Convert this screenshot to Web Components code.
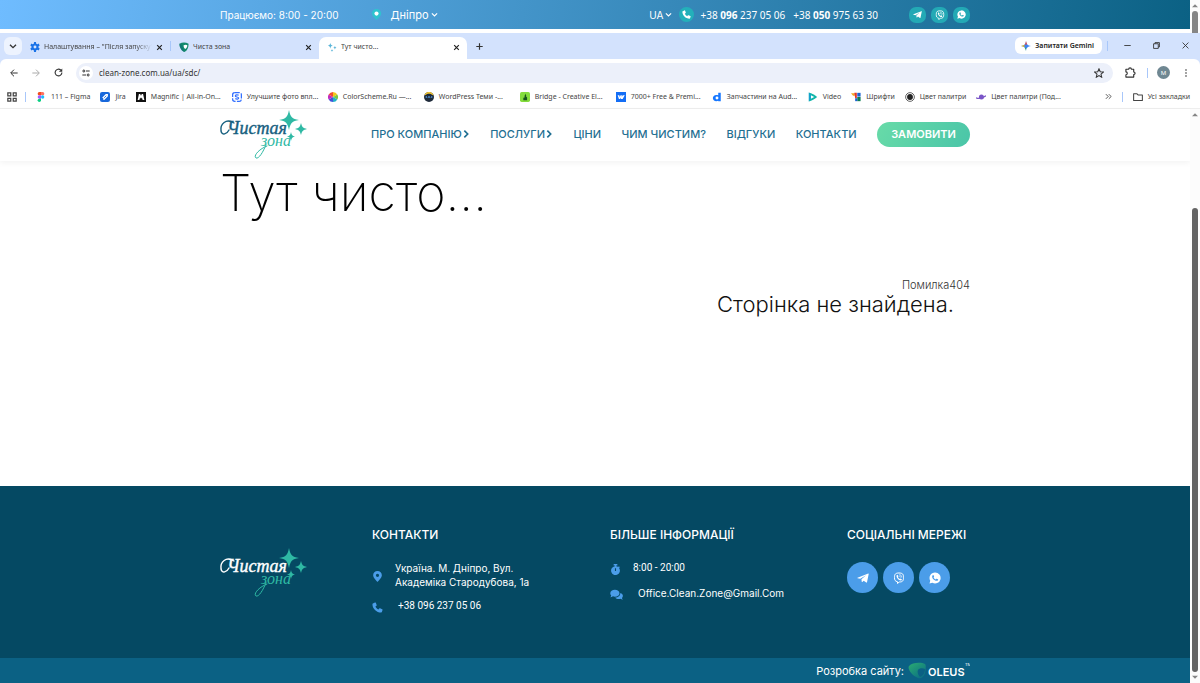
<!DOCTYPE html>
<html lang="uk">
<head>
<meta charset="utf-8">
<title>Тут чисто...</title>
<style>
  html, body { height: 100%; }
  body {
    margin: 0;
    background: #fff;
    color: #111;
    font-family: Inter, "Noto Sans", sans-serif;
    font-size: 10px;
    overflow: hidden;
  }
</style>
</head>
<body>
<clean-zone-desktop></clean-zone-desktop>

<script>
/*
Icons
Each one is the inside of an svg, with its viewBox
*/
const ICONS = {
  pin: ['0 0 24 24', '<path fill="currentColor" fill-rule="evenodd" d="M12 0C6.500 0 2.500 4 2.500 9.500 2.500 15.500 12 24 12 24s9.500-8.500 9.500-14.500C21.500 4 17.500 0 12 0zm0 6a3.500 3.500 0 1 1 0 7 3.500 3.500 0 0 1 0-7z"/>'],
  cityPin: ['0 0 24 24', '<path fill="#2fc3cf" d="M12 0C6 0 2 4.500 2 10c0 6 10 14 10 14s10-8 10-14c0-5.500-4-10-10-10z"/><circle cx="12" cy="10" r="4.500" fill="#fff"/>'],
  phone: ['0 0 24 24', '<path fill="currentColor" d="M2 3.500 6.500 1c.7-.3 1.500 0 1.800.8l1.900 4.800c.2.600 0 1.200-.5 1.600L7.500 10c1.400 3 3.500 5.100 6.500 6.500l1.800-2.200c.4-.5 1.100-.700 1.700-.400l4.700 1.900c.7.300 1 1.100.8 1.800l-1.500 4.400c-.2.600-.8 1-1.400 1C9.500 23 1 14.500 1 4.800c0-.6.400-1.100 1-1.300z"/>'],
  telegram: ['0 0 24 24', '<path fill="currentColor" d="M1 11.500 22.500 3c.6-.2 1 .2.900.9L20 20.500c-.2.900-.8 1-1.500.6l-5.200-3.800-2.600 2.600c-.5.500-1.100.3-1.200-.4l-.6-4.900L18 6.500 6.500 13.700 1.200 12.600c-.9-.3-.9-.8-.2-1.100z"/>'],
  viber: ['0 0 24 24', '<path fill="none" stroke="currentColor" stroke-width="2" d="M12 2c7 0 9 2 9 9s-2 9-8.500 9L9 23v-3.500C4 18.600 3 16 3 11c0-7 2-9 9-9z"/><path fill="currentColor" d="m7 7 2-1.500 2 3-1 1.500c.8 2 1.800 3 3.800 4l1.400-1.200 2.800 2-1.500 2C12 17.500 6.500 11.500 7 7z"/><path fill="none" stroke="currentColor" stroke-width="1.500" d="M12.500 5.500c3.500.3 5 2 5 5.500M12.800 8.300c1.500.2 2.100 1 2.200 2.500"/>'],
  whatsapp: ['0 0 24 24', '<path fill="currentColor" fill-rule="evenodd" d="M12 1a11 11 0 0 0-9.500 16.500L1 23l5.700-1.500A11 11 0 1 0 12 1zM7.500 6.500c.5-.5 1.300-.5 1.600.1l1 2.400c.2.400.1.800-.2 1.200l-.8 1c1 1.800 2.300 3 4.200 3.800l1-1.200c.3-.4.700-.5 1.200-.3l2.300 1.100c.7.300.6 1 .2 1.700-2.400 3.200-11.700-.700-11.700-7.300 0-1.100.5-1.900 1.200-2.500z"/>'],
  chevron: ['0 0 24 24', '<path fill="none" stroke="currentColor" stroke-width="4" d="m3 8 9 9 9-9"/>'],
  chevronRight: ['0 0 24 24', '<path fill="none" stroke="currentColor" stroke-width="5" d="m7 2 10 10L7 22"/>'],
  cross: ['0 0 24 24', '<path stroke="currentColor" stroke-width="4" d="m4 4 16 16M20 4 4 20"/>'],
  thinCross: ['0 0 24 24', '<path stroke="currentColor" stroke-width="3" d="m2 2 20 20M22 2 2 22"/>'],
  plus: ['0 0 24 24', '<path stroke="currentColor" stroke-width="4" d="M12 1v22M1 12h22"/>'],
  minus: ['0 0 24 24', '<path stroke="currentColor" stroke-width="3" d="M1 12h22"/>'],
  restore: ['0 0 24 24', '<path fill="none" stroke="currentColor" stroke-width="3" d="M2 6h16v16H2zM7 6V2h15v15h-4"/>'],
  back: ['0 0 24 24', '<path fill="none" stroke="currentColor" stroke-width="3" d="M23 12H3M12 2 2 12l10 10"/>'],
  forward: ['0 0 24 24', '<path fill="none" stroke="currentColor" stroke-width="3" d="M1 12h20M12 2l10 10-10 10"/>'],
  reload: ['0 0 24 24', '<path fill="none" stroke="currentColor" stroke-width="3" d="M21 12a9 9 0 1 1-3-6.700"/><path fill="currentColor" d="M22 1v9h-9z"/>'],
  tune: ['0 0 24 24', '<path fill="none" stroke="currentColor" stroke-width="3" d="M12 6h11M1 18h11"/><circle cx="5.500" cy="6" r="3" fill="none" stroke="currentColor" stroke-width="3"/><circle cx="18.500" cy="18" r="3" fill="none" stroke="currentColor" stroke-width="3"/>'],
  star: ['0 0 24 24', '<path fill="none" stroke="currentColor" stroke-width="2.500" d="m12 2 3 7 7.500.7-5.700 5 1.700 7.500L12 18.300l-6.500 3.900 1.700-7.500-5.700-5L9 9z"/>'],
  puzzle: ['0 0 24 24', '<path fill="none" stroke="currentColor" stroke-width="2.500" stroke-linejoin="round" d="M2 5h6c0-4 6-4 6 0h5v6c4 0 4 5.500 0 5.500V22H2v-5c4 0 4-6.500 0-6.500z"/>'],
  dots: ['0 0 24 24', '<g fill="currentColor"><circle cx="12" cy="3" r="2.500"/><circle cx="12" cy="12" r="2.500"/><circle cx="12" cy="21" r="2.500"/></g>'],
  folder: ['0 0 24 24', '<path fill="none" stroke="currentColor" stroke-width="2.500" stroke-linejoin="round" d="M1.500 4h7.500l3 3h10.500v13.500h-21z"/>'],
  apps: ['0 0 24 24', '<path fill="none" stroke="currentColor" stroke-width="3" d="M2 2h7v7H2zM15 2h7v7h-7zM2 15h7v7H2zM15 15h7v7h-7z"/>'],
  more: ['0 0 24 24', '<path fill="none" stroke="currentColor" stroke-width="3" d="m3 4 8 8-8 8M13 4l8 8-8 8"/>'],
  arrowUp: ['0 0 10 6', '<path fill="#858585" d="M5 0l5 5H0z"/>'],
  arrowDown: ['0 0 10 6', '<path fill="#858585" d="M5 6 0 1h10z"/>'],
  timer: ['0 0 24 24', '<path fill="currentColor" fill-rule="evenodd" d="M8 0h8v3h-2.500v2c1.600.3 3 .9 4.200 1.800L19.500 5l2 2-1.700 1.900A9.600 9.600 0 1 1 10.500 5V3H8zm2.800 9v6.500h2.400V9z"/>'],
  chat: ['0 0 24 24', '<path fill="currentColor" d="M9 3c4.700 0 8.500 2.800 8.500 6.500S13.700 16 9 16c-1.300 0-2.500-.2-3.600-.6C4 16.400 2 17 .5 17c.8-.8 1.500-2 1.700-3.200C1 12.600.5 11 .5 9.500.5 5.800 4.300 3 9 3z"/><path fill="currentColor" d="M19 9c3 .7 4.800 2.800 4.800 5.500 0 1.500-.6 2.900-1.700 4 .2 1.200.9 2.200 1.700 3-1.600 0-3.400-.6-4.700-1.500-4 1.200-7.800-.200-9.400-2.500C15 17.500 19.200 14 19 9z"/>'],
  gear: ['0 0 24 24', '<path fill="none" stroke="#1a73e8" stroke-width="5" d="M12 6a6 6 0 1 1 0 12 6 6 0 0 1 0-12z"/><path stroke="#1a73e8" stroke-width="5" d="M12 0v5M12 19v5M2 6l4 2.500M18 15.500 22 18M2 18l4-2.500M18 8.500 22 6"/>'],
  shield: ['0 0 24 24', '<path fill="#138a6c" d="M1 4c7-4 15-4 22 0 0 9-3 17-10 20C6 21 1 13 1 4z"/><path fill="#fff" d="M11 8c4-2 7-2 9 0 0 4-2 7-5 9-3-2-4-5-4-9z"/><path fill="#0b6a78" d="M1 4c3 0 6 2 7 6 1 5 3 9 5 14C6 21 1 13 1 4z" opacity=".5"/>'],
  sparkles: ['0 0 24 24', '<path fill="#5bb5d8" d="M8 2c.8 5 2 6 6 7-4 1-5.200 2-6 7-.8-5-2-6-6-7 4-1 5.200-2 6-7zM19 9c.5 3 1.500 4 4 4.500-2.500.5-3.500 1.500-4 4.500-.5-3-1.500-4-4-4.500 2.500-.5 3.500-1.500 4-4.500zM12 17c.4 2 1 3 3 3.500-2 .5-2.600 1.500-3 3.500-.4-2-1-3-3-3.500 2-.5 2.600-1.500 3-3.500z"/>'],
  gemini: ['0 0 24 24', '<path fill="#3d83f5" d="M12 0c1 8 4 11 12 12-8 1-11 4-12 12-1-8-4-11-12-12 8-1 11-4 12-12z"/><path fill="#ea4335" d="M12 0c1 4 1.500 6 3 8l-6 1c1.500-2 2.500-5 3-9z"/><path fill="#fbbc04" d="M0 12c4-.5 6-1.500 8-3v6c-2-1.500-4-2.500-8-3z"/><path fill="#34a853" d="M12 24c-.5-4-1.500-6-3.500-8h4c-.3 2-.4 5-.5 8z"/>'],
  figma: ['0 0 24 24', '<path fill="#f24e1e" d="M8 0h4v8H8a4 4 0 0 1 0-8z"/><path fill="#ff7262" d="M12 0h4a4 4 0 0 1 0 8h-4z"/><path fill="#a259ff" d="M8 8h4v8H8a4 4 0 0 1 0-8z"/><circle cx="16" cy="12" r="4" fill="#1abcfe"/><path fill="#0acf83" d="M8 16h4v4a4 4 0 1 1-4-4z"/>'],
  jira: ['0 0 24 24', '<rect width="24" height="24" rx="5" fill="#1868db"/><path fill="#fff" d="M5 14 14 5h5v5l-9 9H8v-4z"/><path stroke="#1868db" stroke-width="2" d="m10 14 5-5"/>'],
  magnific: ['0 0 24 24', '<rect width="24" height="24" fill="#111"/><path fill="#fff" d="M4 19 7 5h3l2 4 2-4h3l3 14h-4l-2-6-2 3-2-3-2 6z"/>'],
  photo: ['0 0 24 24', '<rect x="1.500" y="1.500" width="21" height="21" rx="5" fill="none" stroke="#3370ff" stroke-width="3" stroke-dasharray="12 3"/><path fill="none" stroke="#3370ff" stroke-width="3" d="M16 8c-3-2-8-1-8 1.500 0 3 8 2 8 5 0 2.500-5 3.500-8 1"/>'],
  wheel: ['0 0 24 24', '<path fill="#f5c518" d="M12 12V0a12 12 0 0 1 10.400 6z"/><path fill="#7ac943" d="M12 12 22.400 6a12 12 0 0 1 0 12z"/><path fill="#22b1c9" d="m12 12 10.400 6A12 12 0 0 1 12 24z"/><path fill="#4353d8" d="M12 12v12a12 12 0 0 1-10.400-6z"/><path fill="#c22bc0" d="M12 12 1.600 18a12 12 0 0 1 0-12z"/><path fill="#ee4b32" d="M12 12 1.600 6A12 12 0 0 1 12 0z"/>'],
  ninja: ['0 0 24 24', '<circle cx="12" cy="12" r="12" fill="#1f2b3b"/><path fill="#f0c330" d="M1 8C4 1 9 0 12 0s8 1 11 8l-3-1C16 3 8 3 4 7z"/><path fill="#4e8dd0" d="M4 10h16v4H4z"/><path fill="#111" d="M7 10h3v3H7zM14 10h3v3h-3z"/>'],
  bridge: ['0 0 24 24', '<rect width="24" height="24" rx="4" fill="#83dc3c"/><path fill="#17551c" d="M8 20v-6l3-1V9l3-5 1 6h-1l3 3v7z"/>'],
  flowbite: ['0 0 24 24', '<rect width="24" height="24" fill="#146ef5"/><path fill="#fff" d="m4 8 4 0 1 4 2-4h3v4l2-4h5l-5 9h-4v-4l-2 4H7z"/>'],
  letterD: ['0 0 24 24', '<path fill="#1677ff" fill-rule="evenodd" d="M15 2h6v20h-6v-1C8 24 2 20 2 14.500 2 9 8 5 15 8zm-3 9a3.500 3.500 0 1 0 0 7 3.500 3.500 0 0 0 0-7z"/>'],
  video: ['0 0 24 24', '<path fill="#10b5a8" d="M2 1c7 2 14 6 20 11C16 17 9 21 2 23z"/><path fill="#fff" d="m7 8 8 4-8 4z"/><path fill="#1594e8" d="M2 1v22l5-7V8z" opacity=".6"/>'],
  fonts: ['0 0 24 24', '<path fill="#f4a51c" d="M0 3h9v6H5z"/><path fill="#e0342c" d="M8 2h6v13h-4z"/><path fill="#1c61d1" d="M15 2h8v9h-8z"/><path fill="#0a7c52" d="M15 12h8v10h-8z"/><path fill="#1c61d1" d="M10 15h5v7h-5z"/>'],
  target: ['0 0 24 24', '<circle cx="12" cy="12" r="10.500" fill="#fff" stroke="#444" stroke-width="2"/><circle cx="12" cy="12" r="7" fill="#222"/>'],
  planet: ['0 0 24 24', '<circle cx="13" cy="12" r="6" fill="#7a55c7"/><path fill="none" stroke="#7a55c7" stroke-width="3" d="M0 14c7 3 18-1 24-5"/>'],
};

// One svg icon, name and size come as attributes
class UiIcon extends HTMLElement {
  constructor() {
    super();
    this.attachShadow({ mode: 'open' });
    const [box, shape] = ICONS[this.getAttribute('name')];
    const size = this.getAttribute('size') || 10;
    this.shadowRoot.innerHTML = `
      <style>
        :host { display: inline-flex; flex: none; }
        svg { display: block; width: ${size}px; height: ${size}px; }
      </style>
      <svg viewBox="${box}" aria-hidden="true">${shape}</svg>
    `;
  }
}

// Logo with the sparkles, the word colour comes from --logo-ink
class BrandLogo extends HTMLElement {
  constructor() {
    super();
    this.attachShadow({ mode: 'open' });
    this.shadowRoot.innerHTML = `
      <style>
        :host { display: block; flex: none; }
        svg { display: block; width: 88px; height: 50px; overflow: visible; }
        .word { font: italic 18px "Liberation Serif", serif; fill: var(--logo-ink, #17607f); stroke: var(--logo-ink, #17607f); stroke-width: .4; }
        .zone { font: italic 16px "Liberation Serif", serif; fill: #2fb9a4; }
      </style>
      <svg viewBox="0 0 88 50" role="img">
        <text class="word" x="7" y="24">Чистая</text>
        <text class="zone" x="41" y="36">зона</text>
        <path fill="none" stroke="var(--logo-ink, #17607f)" stroke-width="1.400" stroke-linecap="round" d="M14 13C6 8 0 14 1 21c1 5 6 3 8-1"/>
        <path fill="none" stroke="#2fb9a4" stroke-width="1" stroke-linecap="round" d="M46 35c-3 7-7 14-10 13-3-2 3-9 11-12"/>
        <path fill="#2fb9a4" d="M69 0c1.500 7 3 9 10 10-7 1-8.500 3-10 10-1.500-7-3-9-10-10 7-1 8.500-3 10-10zM81 13c1 4 2 5 6 6-4 1-5 2-6 6-1-4-2-5-6-6 4-1 5-2 6-6zM71 22c.6 3 1.500 4 4 4.500-2.500.5-3.400 1.500-4 4.500-.6-3-1.500-4-4-4.500 2.500-.5 3.400-1.500 4-4.500z"/>
      </svg>
    `;
  }
}

class ScrollTrack extends HTMLElement {
  constructor() {
    super();
    this.attachShadow({ mode: 'open' });
    this.shadowRoot.innerHTML = `
      <style>
        :host { display: flex; flex-direction: column; align-items: center; flex: none; width: 10px; padding: 3px 0; box-sizing: border-box; background: #fcfcfc; overflow: hidden; }
        .before { flex: var(--before, 0) 0 0; }
        .thumb { flex: var(--thumb, 1) 0 0; width: 6px; border-radius: var(--thumb-radius, 3px); background: var(--thumb-ink, #636363); margin: 2px 0 var(--thumb-end, 2px); }
      </style>
      <ui-icon name="arrowUp" size="6"></ui-icon>
      <div class="before"></div>
      <div class="thumb"></div>
      <slot></slot>
    `;
  }
}

// Blue strip with the work hours and the phones
class TopBar extends HTMLElement {
  constructor() {
    super();
    this.attachShadow({ mode: 'open' });
    this.shadowRoot.innerHTML = `
      <style>
        :host { display: flex; height: 33px; background: #fff; }
        .bar { flex: 1; height: 29px; background: linear-gradient(100deg, #6fbcff, #0b6184); color: #fff; }
        .inner { display: flex; align-items: center; max-width: 750px; height: 29px; margin: 0 auto; }
        .city { display: flex; align-items: center; gap: 4px; margin-left: 32px; }
        .pin { margin-right: 5px; display: flex; }
        button { display: flex; align-items: center; gap: 2px; padding: 0; border: 0; background: none; color: inherit; font: inherit; }
        .city button { font-size: 11px; }
        .right { display: flex; align-items: center; margin-left: auto; }
        .round { display: flex; align-items: center; justify-content: center; width: 15px; height: 15px; border-radius: 50%; background: #23b0ba; margin: 0 6px 0 7px; }
        .phone { color: #fff; text-decoration: none; margin-right: 8px; font-family: "Noto Sans", sans-serif; }
        .social { display: flex; gap: 5px; margin-left: 23px; }
        .social a { display: flex; align-items: center; justify-content: center; width: 17px; height: 16px; border-radius: 7px; background: #23a9b5; color: #fff; }
        scroll-track { --thumb-ink: #858585; --thumb-radius: 3px 3px 0 0; --thumb-end: 0; padding-bottom: 0; }
      </style>
      <div class="bar">
        <div class="inner">
          <span>Працюємо: 8:00 - 20:00</span>
          <div class="city">
            <span class="pin"><ui-icon name="cityPin" size="11"></ui-icon></span>
            <button>Дніпро <ui-icon name="chevron" size="7"></ui-icon></button>
          </div>
          <div class="right">
            <button>UA <ui-icon name="chevron" size="7"></ui-icon></button>
            <span class="round"><ui-icon name="phone" size="9"></ui-icon></span>
            <a class="phone" href="#">+38 <b>096</b> 237 05 06</a>
            <a class="phone" href="#">+38 <b>050</b> 975 63 30</a>
            <div class="social">
              <a href="#" aria-label="Telegram"><ui-icon name="telegram" size="9"></ui-icon></a>
              <a href="#" aria-label="Viber"><ui-icon name="viber" size="10"></ui-icon></a>
              <a href="#" aria-label="WhatsApp"><ui-icon name="whatsapp" size="9"></ui-icon></a>
            </div>
          </div>
        </div>
      </div>
      <scroll-track></scroll-track>
    `;
  }
}

class BrowserTab extends HTMLElement {
  constructor() {
    super();
    this.attachShadow({ mode: 'open' });
    this.shadowRoot.innerHTML = `
      <style>
        :host { display: flex; align-items: center; gap: 4px; flex: none; width: 148px; height: 22px; padding: 0 7px 2px 8px; box-sizing: border-box; border-radius: 7px 7px 0 0; }
        :host([active]) { background: #fff; }
        .name { flex: 1; overflow: hidden; white-space: nowrap; }
        :host([long]) .name { -webkit-mask: linear-gradient(90deg, #000 85%, transparent); mask: linear-gradient(90deg, #000 85%, transparent); }
        button { display: flex; padding: 0; border: 0; background: none; color: #222; }
      </style>
      <ui-icon name="${this.getAttribute('icon')}" size="10"></ui-icon>
      <span class="name"><slot></slot></span>
      <button aria-label="Закрити"><ui-icon name="cross" size="7"></ui-icon></button>
    `;
  }
}

class BookmarkLink extends HTMLElement {
  constructor() {
    super();
    this.attachShadow({ mode: 'open' });
    this.shadowRoot.innerHTML = `
      <style>
        :host { display: block; flex: none; }
        :host([wide]) { width: 86px; }
        a { display: flex; align-items: center; gap: 5px; color: #444; text-decoration: none; white-space: nowrap; }
      </style>
      <a href="#"><ui-icon name="${this.getAttribute('icon')}" size="10"></ui-icon><span><slot></slot></span></a>
    `;
  }
}

// Tabs, address line and bookmarks
class BrowserChrome extends HTMLElement {
  constructor() {
    super();
    this.attachShadow({ mode: 'open' });
    this.shadowRoot.innerHTML = `
      <style>
        :host { display: block; background: #d3e2fd; color: #444; font: 7px/10px "Noto Sans", sans-serif; }
        button { display: flex; align-items: center; padding: 0; border: 0; background: none; color: #333; font: inherit; }
        .tabs { display: flex; align-items: flex-end; height: 26px; }
        .list { width: 18px; height: 18px; justify-content: center; border-radius: 6px; background: #edf3fe; margin: 0 0 4px 4px; }
        .sep { width: 1px; height: 10px; background: #a8c7fa; }
        .tabs .sep { margin-bottom: 8px; }
        .add { margin: 0 0 9px 9px; }
        .window { display: flex; align-items: center; margin: 0 11px 5px auto; }
        .gemini { height: 17px; padding: 0 8px 0 6px; gap: 4px; border-radius: 6px; background: #fff; color: #222; font-weight: 600; margin-right: 5px; }
        .tabs .window .sep { margin: 0; }
        .window .ctl { width: 8px; justify-content: center; margin-left: 21px; }
        .window .sep + .ctl { margin-left: 15px; }
        .tool { display: flex; align-items: center; height: 26px; padding: 1px 10px 0; background: #fff; border-radius: 6px 6px 0 0; box-sizing: border-box; }
        .tool > button { margin-right: 14px; }
        .tool > button.reload { margin-right: 13px; }
        .address { display: flex; align-items: center; flex: 1; height: 20px; border-radius: 10px; background: #ecf0fa; padding: 0 9px 0 3px; }
        .site { width: 14px; height: 14px; border-radius: 7px; background: #fff; justify-content: center; }
        input { flex: 1; border: 0; padding: 0; margin-left: 6px; background: none; color: #333; font: 8px/12px "Noto Sans", sans-serif; }
        .tool > button.puzzle { margin: 0 11px 0 12px; }
        .avatar { display: flex; align-items: center; justify-content: center; width: 13px; height: 13px; border-radius: 7px; background: #6f8792; color: #fff; font-size: 6px; margin: 0 12px 0 9px; }
        .tool > button.menu { margin: 0; }
        .marks { display: flex; align-items: center; gap: 10px; height: 23px; padding: 0 10px 0 7px; background: #fff; border-bottom: 1px solid #eee; }
        .tools { display: flex; align-items: center; gap: 8px; }
        .end { display: flex; align-items: center; gap: 10px; margin-left: auto; }
        .end button { gap: 5px; color: #444; }
      </style>
      <div class="tabs">
        <button class="list" aria-label="Вкладки"><ui-icon name="chevron" size="8"></ui-icon></button>
        <browser-tab icon="gear" long>Налаштування – "Після запуску"</browser-tab>
        <span class="sep"></span>
        <browser-tab icon="shield">Чиста зона</browser-tab>
        <browser-tab icon="sparkles" active>Тут чисто...</browser-tab>
        <button class="add" aria-label="Нова вкладка"><ui-icon name="plus" size="7"></ui-icon></button>
        <div class="window">
          <button class="gemini"><ui-icon name="gemini" size="10"></ui-icon>Запитати Gemini</button>
          <span class="sep"></span>
          <button class="ctl" aria-label="Згорнути"><ui-icon name="minus" size="7"></ui-icon></button>
          <button class="ctl" aria-label="Відновити"><ui-icon name="restore" size="7"></ui-icon></button>
          <button class="ctl" aria-label="Закрити"><ui-icon name="thinCross" size="7"></ui-icon></button>
        </div>
      </div>
      <div class="tool">
        <button aria-label="Назад"><ui-icon name="back" size="8"></ui-icon></button>
        <button aria-label="Вперед" style="color:#aaa"><ui-icon name="forward" size="8"></ui-icon></button>
        <button class="reload" aria-label="Оновити"><ui-icon name="reload" size="9"></ui-icon></button>
        <div class="address">
          <button class="site" aria-label="Дані сайту"><ui-icon name="tune" size="8"></ui-icon></button>
          <input aria-label="Адреса" value="clean-zone.com.ua/ua/sdc/">
          <button aria-label="Закладка"><ui-icon name="star" size="10"></ui-icon></button>
        </div>
        <button class="puzzle" aria-label="Розширення"><ui-icon name="puzzle" size="11"></ui-icon></button>
        <span class="sep"></span>
        <span class="avatar">M</span>
        <button class="menu" aria-label="Меню"><ui-icon name="dots" size="8"></ui-icon></button>
      </div>
      <nav class="marks">
        <div class="tools">
          <ui-icon name="apps" size="10"></ui-icon>
          <span class="sep"></span>
        </div>
        <bookmark-link icon="figma">111 – Figma</bookmark-link>
        <bookmark-link icon="jira">Jira</bookmark-link>
        <bookmark-link icon="magnific" wide>Magnific | All-in-On...</bookmark-link>
        <bookmark-link icon="photo" wide>Улучшите фото впл...</bookmark-link>
        <bookmark-link icon="wheel" wide>ColorScheme.Ru —...</bookmark-link>
        <bookmark-link icon="ninja" wide>WordPress Теми -...</bookmark-link>
        <bookmark-link icon="bridge" wide>Bridge - Creative El...</bookmark-link>
        <bookmark-link icon="flowbite" wide>7000+ Free &amp; Premi...</bookmark-link>
        <bookmark-link icon="letterD" wide>Запчастини на Aud...</bookmark-link>
        <bookmark-link icon="video">Video</bookmark-link>
        <bookmark-link icon="fonts">Шрифти</bookmark-link>
        <bookmark-link icon="target">Цвет палитри</bookmark-link>
        <bookmark-link icon="planet" wide>Цвет палитри (Под...</bookmark-link>
        <div class="end">
          <button aria-label="Ще закладки"><ui-icon name="more" size="7"></ui-icon></button>
          <span class="sep"></span>
          <button><ui-icon name="folder" size="10"></ui-icon>Усі закладки</button>
        </div>
      </nav>
    `;
  }
}

class SiteHeader extends HTMLElement {
  constructor() {
    super();
    this.attachShadow({ mode: 'open' });
    this.shadowRoot.innerHTML = `
      <style>
        :host { display: block; box-shadow: 0 2px 6px rgba(0, 0, 0, .05); }
        .inner { display: flex; align-items: center; max-width: 750px; height: 52px; margin: 0 auto; }
        nav { display: flex; align-items: center; justify-content: space-between; flex: 1; margin: 0 0 2px 63px; }
        a { display: flex; align-items: center; color: #1f6f92; text-decoration: none; font-size: 11px; font-weight: 500; }
        button { height: 25px; padding: 0 14px; border: 0; border-radius: 13px; background: linear-gradient(120deg, #68dba8, #4ac5a8); color: #fff; font: 600 11px Inter, sans-serif; }
      </style>
      <div class="inner">
        <brand-logo></brand-logo>
        <nav>
          <a href="#">ПРО КОМПАНІЮ<ui-icon name="chevronRight" size="8"></ui-icon></a>
          <a href="#">ПОСЛУГИ<ui-icon name="chevronRight" size="8"></ui-icon></a>
          <a href="#">ЦІНИ</a>
          <a href="#">ЧИМ ЧИСТИМ?</a>
          <a href="#">ВІДГУКИ</a>
          <a href="#">КОНТАКТИ</a>
          <button>ЗАМОВИТИ</button>
        </nav>
      </div>
    `;
  }
}

class ErrorPage extends HTMLElement {
  constructor() {
    super();
    this.attachShadow({ mode: 'open' });
    this.shadowRoot.innerHTML = `
      <style>
        :host { display: block; flex: 1; }
        .inner { max-width: 750px; margin: 0 auto; }
        h1 { margin: 0; padding-top: 4px; font-size: 50px; line-height: 56px; font-weight: 200; color: #000; }
        .error { display: flex; flex-direction: column; align-items: flex-end; padding-top: 57px; }
        .code { font-size: 11px; line-height: 14px; font-weight: 300; color: #333; }
        .text { font-size: 22px; line-height: 24px; font-weight: 300; margin: 0 16px 0 0; }
      </style>
      <div class="inner">
        <h1>Тут чисто...</h1>
        <div class="error">
          <span class="code">Помилка404</span>
          <p class="text">Сторінка не знайдена.</p>
        </div>
      </div>
    `;
  }
}

class SiteFooter extends HTMLElement {
  constructor() {
    super();
    this.attachShadow({ mode: 'open' });
    this.shadowRoot.innerHTML = `
      <style>
        :host { display: block; background: #054963; color: #fff; --logo-ink: #fff; }
        .inner { display: grid; grid-template-columns: 152fr 238fr 237fr 123fr; max-width: 750px; margin: 0 auto; min-height: 172px; padding-top: 42px; box-sizing: border-box; }
        brand-logo { margin-top: 20px; }
        h2 { margin: 0; font-size: 12px; line-height: 14px; font-weight: 500; white-space: nowrap; }
        .row { display: flex; align-items: center; gap: 12px; color: #4b9de9; }
        .row ui-icon { padding-top: 3px; }
        .row a, .row span { color: #fff; text-decoration: none; line-height: 14px; }
        .row .num { font-family: Roboto, sans-serif; }
        .row.first { margin-top: 19px; }
        .row.second { gap: 15px; margin-top: 10px; }
        .social { display: flex; gap: 5px; margin-top: 20px; }
        .social a { display: flex; align-items: center; justify-content: center; width: 31px; height: 31px; border-radius: 50%; background: #4b9de9; color: #fff; }
        .bottom { background: #0b6184; }
        .credit { display: flex; align-items: center; justify-content: flex-end; gap: 4px; max-width: 750px; height: 25px; margin: 0 auto; font-size: 11px; }
        .credit a { display: flex; color: #fff; }
        svg { display: block; width: 62px; height: 20px; }
        svg text { font-family: Inter, sans-serif; fill: #fff; }
      </style>
      <div class="inner">
        <brand-logo></brand-logo>
        <div>
          <h2>КОНТАКТИ</h2>
          <div class="row first"><ui-icon name="pin" size="11"></ui-icon><span>Україна. М. Дніпро, Вул.<br>Академіка Стародубова, 1а</span></div>
          <div class="row second"><ui-icon name="phone" size="11"></ui-icon><a class="num" href="#">+38 096 237 05 06</a></div>
        </div>
        <div>
          <h2>БІЛЬШЕ ІНФОРМАЦІЇ</h2>
          <div class="row first"><ui-icon name="timer" size="11"></ui-icon><span class="num">8:00 - 20:00</span></div>
          <div class="row second"><ui-icon name="chat" size="13"></ui-icon><a href="#">Office.Clean.Zone@Gmail.Com</a></div>
        </div>
        <div>
          <h2>СОЦІАЛЬНІ МЕРЕЖІ</h2>
          <div class="social">
            <a href="#" aria-label="Telegram"><ui-icon name="telegram" size="12"></ui-icon></a>
            <a href="#" aria-label="Viber"><ui-icon name="viber" size="12"></ui-icon></a>
            <a href="#" aria-label="WhatsApp"><ui-icon name="whatsapp" size="12"></ui-icon></a>
          </div>
        </div>
      </div>
      <div class="bottom">
        <div class="credit">
          <span>Розробка сайту:</span>
          <a href="#">
            <svg viewBox="0 0 62 20" role="img">
              <defs><linearGradient id="leaf" x1="0" y1="0" x2=".8" y2="1"><stop offset=".2" stop-color="#24a074"/><stop offset="1" stop-color="#0b6f84"/></linearGradient></defs>
              <path fill="url(#leaf)" fill-rule="evenodd" d="M1 5c3-4 13-4 16-2 1 1 1 3 0 9-1 4-4 6-7 5C4 15-1 8 1 5zM10 9c-1 2 0 5 2 7 3-1 5-4 5-8-2-1-6-1-7 1z"/>
              <text x="20" y="15" font-size="11" font-weight="600">OLEUS</text>
              <text x="57" y="5" font-size="4">TM</text>
            </svg>
          </a>
        </div>
      </div>
    `;
  }
}

class CleanZoneDesktop extends HTMLElement {
  constructor() {
    super();
    this.attachShadow({ mode: 'open' });
    this.shadowRoot.innerHTML = `
      <style>
        :host { display: flex; flex-direction: column; min-height: 100vh; }
        .view { display: flex; flex: 1; }
        .page { display: flex; flex-direction: column; flex: 1; }
        scroll-track { --before: 88; --thumb: 463; }
      </style>
      <top-bar></top-bar>
      <browser-chrome></browser-chrome>
      <div class="view">
        <div class="page">
          <site-header></site-header>
          <error-page></error-page>
          <site-footer></site-footer>
        </div>
        <scroll-track><ui-icon name="arrowDown" size="6"></ui-icon></scroll-track>
      </div>
    `;
  }
}

customElements.define('ui-icon', UiIcon);
customElements.define('brand-logo', BrandLogo);
customElements.define('scroll-track', ScrollTrack);
customElements.define('top-bar', TopBar);
customElements.define('browser-tab', BrowserTab);
customElements.define('bookmark-link', BookmarkLink);
customElements.define('browser-chrome', BrowserChrome);
customElements.define('site-header', SiteHeader);
customElements.define('error-page', ErrorPage);
customElements.define('site-footer', SiteFooter);
customElements.define('clean-zone-desktop', CleanZoneDesktop);
</script>
</body>
</html>
